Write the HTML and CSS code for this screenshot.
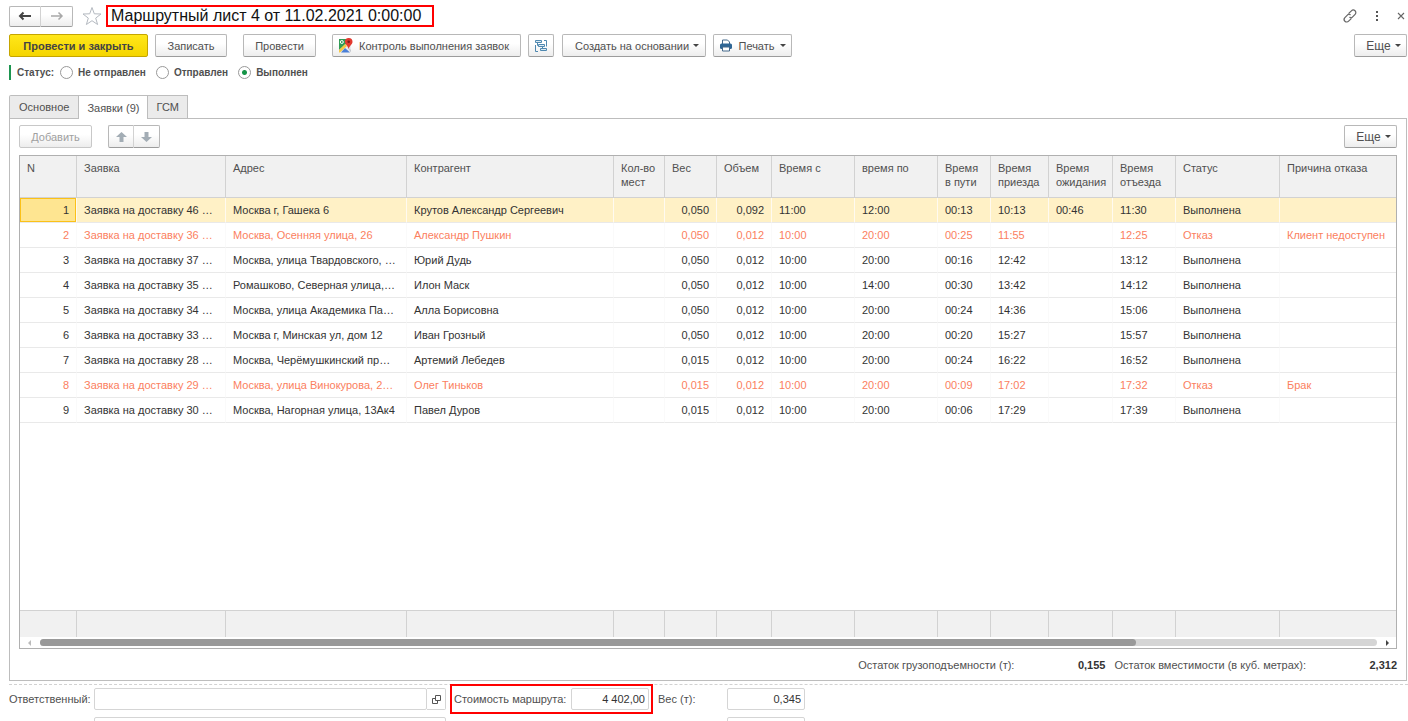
FILE: index.html
```html
<!DOCTYPE html>
<html lang="ru">
<head>
<meta charset="utf-8">
<title>Маршрутный лист 4 от 11.02.2021 0:00:00</title>
<link rel="stylesheet" href="styles.css">
</head>
<body>
<main class="form">
  <header class="titlebar">
    <div class="btn-pair">
      <button class="btn nav-btn" type="button" aria-label="Назад"><svg width="14" height="10" viewBox="0 0 14 10"><path d="M13 5H2M5.500 1.500L2 5l3.500 3.500" fill="none" stroke="#444" stroke-width="2"/></svg></button>
      <button class="btn nav-btn" type="button" aria-label="Вперед"><svg width="14" height="10" viewBox="0 0 14 10"><path d="M1 5h11M8.500 1.500L12 5 8.500 8.500" fill="none" stroke="#a8a8a8" stroke-width="1.500"/></svg></button>
    </div>
    <button class="icon-btn star" type="button" aria-label="В избранное"><svg width="20" height="20" viewBox="0 0 20 20"><path d="M10 1.500l2.300 6.300 6.700.2-5.300 4.100 1.900 6.400L10 14.700l-5.600 3.800 1.900-6.400L1 8l6.700-.2z" fill="#fff" stroke="#b4b9c0"/></svg></button>
    <h1 class="title">Маршрутный лист 4 от 11.02.2021 0:00:00</h1>
    <div class="window-tools">
      <button class="icon-btn" type="button" aria-label="Ссылка"><svg width="14" height="14" viewBox="0 0 14 14"><g fill="none" stroke="#666" stroke-width="1.200" stroke-linecap="round"><path d="M6 4.200l2.400-2.400a2.300 2.300 0 0 1 3.700 3.600L9.400 8.100a2 2 0 0 1-2.600.2"/><path d="M8 9.800l-2.400 2.400a2.300 2.300 0 0 1-3.700-3.600l2.700-2.700a2 2 0 0 1 2.600-.2"/></g></svg></button>
      <button class="icon-btn" type="button" aria-label="Меню"><svg width="4" height="12" viewBox="0 0 4 12"><path d="M1 1h2v2H1zM1 5h2v2H1zM1 9h2v2H1z" fill="#555"/></svg></button>
      <button class="icon-btn" type="button" aria-label="Закрыть"><svg width="8" height="8" viewBox="0 0 8 8"><path d="M1 1l6 6M7 1L1 7" stroke="#666" stroke-width="1.100"/></svg></button>
    </div>
  </header>

  <div class="commands">
    <button class="btn primary" type="button">Провести и закрыть</button>
    <button class="btn save" type="button">Записать</button>
    <button class="btn post" type="button">Провести</button>
    <button class="btn control" type="button"><svg width="15" height="15" viewBox="0 0 15 15"><path d="M1 1h12v13H1z" fill="#e8eaed"/><path d="M1 1h8v4L1 12z" fill="#2f9b55"/><path d="M1 12l6-6 2 2-7 6.500H1z" fill="#f6c945"/><path d="M3 14.500l4-4.500 5 4.500z" fill="#4a7fd6"/><path d="M9 8l4 4v2.500z" fill="#c4c8ce"/><circle cx="3.800" cy="4" r="1.500" fill="none" stroke="#fff"/><path d="M10.700 0a3.800 3.800 0 0 1 3.800 3.800c0 2.700-2.800 3.700-3.800 7.200-1-3.500-3.800-4.500-3.800-7.200A3.800 3.800 0 0 1 10.700 0z" fill="#e2392f"/><circle cx="10.700" cy="3.800" r="1.300" fill="#7c1d18"/></svg>Контроль выполнения заявок</button>
    <button class="btn structure" type="button" aria-label="Структура подчиненности"><svg width="14" height="14" viewBox="0 0 14 14"><g fill="#dcebf5" stroke="#4f88b0"><path d="M1.500 1.500h6v2h-6zM4.500 5.500h6v2h-6zM6.500 9.500h6v2h-6z"/><path d="M10 1.500h2.500v6M1.500 6v6.500H4M3.500 3.500v3h1M8.500 7.500v2" fill="none"/></g></svg></button>
    <button class="btn create" type="button">Создать на основании<span class="caret"></span></button>
    <button class="btn print" type="button"><svg width="14" height="13" viewBox="0 0 14 13"><path d="M3.500 5V1h5l2 2v2" fill="#fff" stroke="#44688a"/><rect x="1" y="4.500" width="12" height="5.500" rx="1.500" fill="#2f6695"/><path d="M3.500 8h7v4h-7z" fill="#fff" stroke="#44688a"/></svg>Печать<span class="caret"></span></button>
    <button class="btn more" type="button">Еще<span class="caret"></span></button>
  </div>

  <fieldset class="status">
    <legend class="status-name">Статус:</legend>
    <label class="choice"><input type="radio" name="status">Не отправлен</label>
    <label class="choice"><input type="radio" name="status">Отправлен</label>
    <label class="choice"><input type="radio" name="status" checked>Выполнен</label>
  </fieldset>

  <div class="tabs" role="tablist">
    <button class="tab" type="button" role="tab">Основное</button>
    <button class="tab active" type="button" role="tab" aria-selected="true">Заявки (9)</button>
    <button class="tab" type="button" role="tab">ГСМ</button>
  </div>

  <section class="panel">
    <div class="panel-tools">
      <button class="btn add" type="button" disabled>Добавить</button>
      <div class="btn-pair">
        <button class="btn move-btn" type="button" aria-label="Вверх"><svg width="11" height="10" viewBox="0 0 11 10"><path d="M5.500 0L11 5H7.500v5h-4V5H0z" fill="#a3adb5"/></svg></button>
        <button class="btn move-btn" type="button" aria-label="Вниз"><svg width="11" height="10" viewBox="0 0 11 10"><path d="M5.500 10L0 5h3.500V0h4v5H11z" fill="#a3adb5"/></svg></button>
      </div>
      <button class="btn more" type="button">Еще<span class="caret"></span></button>
    </div>

    <div class="grid">
      <table class="orders">
        <colgroup>
          <col class="c-n"><col class="c-order"><col class="c-addr"><col class="c-client"><col class="c-qty"><col class="c-weight"><col class="c-volume"><col class="c-from"><col class="c-to"><col class="c-way"><col class="c-arrive"><col class="c-wait"><col class="c-leave"><col class="c-status"><col class="c-reason">
        </colgroup>
        <thead>
          <tr><th>N</th><th>Заявка</th><th>Адрес</th><th>Контрагент</th><th>Кол-во<br>мест</th><th>Вес</th><th>Объем</th><th>Время с</th><th>время по</th><th>Время<br>в пути</th><th>Время<br>приезда</th><th>Время<br>ожидания</th><th>Время<br>отъезда</th><th>Статус</th><th>Причина отказа</th></tr>
        </thead>
        <tbody>
          <tr class="selected"><td class="num current">1</td><td>Заявка на доставку 46 …</td><td>Москва г, Гашека 6</td><td>Крутов Александр Сергеевич</td><td></td><td class="num">0,050</td><td class="num">0,092</td><td>11:00</td><td>12:00</td><td>00:13</td><td>10:13</td><td>00:46</td><td>11:30</td><td>Выполнена</td><td></td></tr>
          <tr class="refused"><td class="num">2</td><td>Заявка на доставку 36 …</td><td>Москва, Осенняя улица, 26</td><td>Александр Пушкин</td><td></td><td class="num">0,050</td><td class="num">0,012</td><td>10:00</td><td>20:00</td><td>00:25</td><td>11:55</td><td></td><td>12:25</td><td>Отказ</td><td>Клиент недоступен</td></tr>
          <tr><td class="num">3</td><td>Заявка на доставку 37 …</td><td>Москва, улица Твардовского, …</td><td>Юрий Дудь</td><td></td><td class="num">0,050</td><td class="num">0,012</td><td>10:00</td><td>20:00</td><td>00:16</td><td>12:42</td><td></td><td>13:12</td><td>Выполнена</td><td></td></tr>
          <tr><td class="num">4</td><td>Заявка на доставку 35 …</td><td>Ромашково, Северная улица,…</td><td>Илон Маск</td><td></td><td class="num">0,050</td><td class="num">0,012</td><td>10:00</td><td>14:00</td><td>00:30</td><td>13:42</td><td></td><td>14:12</td><td>Выполнена</td><td></td></tr>
          <tr><td class="num">5</td><td>Заявка на доставку 34 …</td><td>Москва, улица Академика Па…</td><td>Алла Борисовна</td><td></td><td class="num">0,050</td><td class="num">0,012</td><td>10:00</td><td>20:00</td><td>00:24</td><td>14:36</td><td></td><td>15:06</td><td>Выполнена</td><td></td></tr>
          <tr><td class="num">6</td><td>Заявка на доставку 33 …</td><td>Москва г, Минская ул, дом 12</td><td>Иван Грозный</td><td></td><td class="num">0,050</td><td class="num">0,012</td><td>10:00</td><td>20:00</td><td>00:20</td><td>15:27</td><td></td><td>15:57</td><td>Выполнена</td><td></td></tr>
          <tr><td class="num">7</td><td>Заявка на доставку 28 …</td><td>Москва, Черёмушкинский пр…</td><td>Артемий Лебедев</td><td></td><td class="num">0,015</td><td class="num">0,012</td><td>10:00</td><td>20:00</td><td>00:24</td><td>16:22</td><td></td><td>16:52</td><td>Выполнена</td><td></td></tr>
          <tr class="refused"><td class="num">8</td><td>Заявка на доставку 29 …</td><td>Москва, улица Винокурова, 2…</td><td>Олег Тиньков</td><td></td><td class="num">0,015</td><td class="num">0,012</td><td>10:00</td><td>20:00</td><td>00:09</td><td>17:02</td><td></td><td>17:32</td><td>Отказ</td><td>Брак</td></tr>
          <tr><td class="num">9</td><td>Заявка на доставку 30 …</td><td>Москва, Нагорная улица, 13Ак4</td><td>Павел Дуров</td><td></td><td class="num">0,015</td><td class="num">0,012</td><td>10:00</td><td>20:00</td><td>00:06</td><td>17:29</td><td></td><td>17:39</td><td>Выполнена</td><td></td></tr>
          <tr class="filler"><td colspan="15"></td></tr>
        </tbody>
        <tfoot>
          <tr><td></td><td></td><td></td><td></td><td></td><td></td><td></td><td></td><td></td><td></td><td></td><td></td><td></td><td></td><td></td></tr>
        </tfoot>
      </table>
      <div class="scroll">
        <span class="arrow arrow-left"></span>
        <div class="track"><div class="thumb"></div></div>
        <span class="arrow arrow-right"></span>
      </div>
    </div>

    <dl class="totals">
      <dt>Остаток грузоподъемности (т):</dt><dd>0,155</dd>
      <dt>Остаток вместимости (в куб. метрах):</dt><dd>2,312</dd>
    </dl>
  </section>

  <footer class="fields">
    <div class="field-row">
      <label class="field-name" for="responsible">Ответственный:</label>
      <div class="picker"><input class="box" id="responsible" type="text"><button class="pick" type="button" aria-label="Открыть"><svg width="9" height="9" viewBox="0 0 9 9"><path d="M3.500.5h5v5h-5zM3.500 3.500h-3v5h5v-3" fill="none" stroke="#555"/></svg></button></div>
      <div class="cost"><label for="cost">Стоимость маршрута:</label><input class="box" id="cost" type="text" value="4 402,00"></div>
      <label class="weight-name" for="weight">Вес (т):</label>
      <input class="box weight" id="weight" type="text" value="0,345">
    </div>
    <div class="field-row">
      <label class="field-name" for="executor">Исполнительный:</label>
      <div class="picker"><input class="box" id="executor" type="text"></div>
      <span class="cost-space"></span>
      <span class="weight-name"></span>
      <input class="box weight" type="text" aria-label="Объем">
    </div>
  </footer>
</main>
</body>
</html>
```
FILE: styles.css
```css
* { box-sizing: border-box; }

body {
  margin: 0;
  height: 100vh;
  overflow: hidden;
  background: #fff;
  color: #505050;
  font: 11px/14px "Liberation Sans", Arial, sans-serif;
}

button, input { font: inherit; color: inherit; margin: 0; }

.form { padding: 5px 0 0 9px; }

/* Buttons */
.btn {
  display: flex;
  align-items: center;
  justify-content: center;
  height: 23px;
  padding: 0;
  border: 1px solid #b8b8b8;
  border-bottom-color: #9c9c9c;
  border-radius: 2px;
  background: linear-gradient(#fff 40%, #ededed);
  white-space: nowrap;
}
.btn:disabled { color: #a0a0a0; border-color: #c8c8c8; }
.btn-pair { display: flex; }
.btn-pair .btn:first-child { border-radius: 2px 0 0 2px; border-right-color: #d2d2d2; }
.btn-pair .btn:last-child { border-left: 0; border-radius: 0 2px 2px 0; }
.caret {
  margin-left: 4px;
  border: 3px solid transparent;
  border-top-color: #444;
  border-bottom: 0;
}
.icon-btn { display: flex; padding: 0; border: 0; background: none; }
.more { width: 53px; margin-left: auto; padding-left: 6px; font-size: 12px; }

/* Title */
.titlebar { display: flex; align-items: center; height: 22px; padding-right: 3px; }
.nav-btn { width: 32px; height: 21px; }
.star { margin: 0 4px 0 9px; }
.title {
  margin: 0;
  padding: 0 11px 0 3px;
  border: 2px solid #f00;
  color: #111;
  font-size: 16px;
  font-weight: normal;
  line-height: 18px;
  white-space: nowrap;
}
.window-tools { display: flex; align-items: center; gap: 18px; margin-left: auto; }

/* Commands */
.commands { display: flex; padding: 7px 1px 0 0; }
.primary {
  width: 139px;
  border-color: #c5a500;
  background: linear-gradient(#ffe71a, #f5d500);
  color: #444;
  font-weight: bold;
}
.save { width: 72px; margin-left: 7px; }
.post { width: 73px; margin-left: 16px; }
.control { width: 189px; gap: 6px; margin-left: 16px; padding-right: 6px; }
.structure { width: 26px; margin-left: 7px; }
.create { width: 144px; margin-left: 8px; padding-left: 6px; }
.print { width: 79px; margin-left: 7px; gap: 5px; }
.print .caret { margin-left: 0; }

/* Status */
.status {
  display: flex;
  align-items: center;
  gap: 10px;
  height: 15px;
  margin: 8px 0 0;
  padding: 0 0 0 6px;
  border: 0;
  border-left: 2px solid #1d9550;
  font-size: 10px;
  font-weight: bold;
}
.status-name { float: left; padding: 0; margin-right: -4px; }
.choice { display: flex; align-items: center; gap: 5px; }
.choice input {
  appearance: none;
  width: 13px;
  height: 13px;
  border: 1px solid #999;
  border-radius: 50%;
  background: #fff;
}
.choice input:checked { background: radial-gradient(circle, #159447 2px, #fff 3px); }

/* Tabs */
.tabs { display: flex; margin-top: 15px; }
.tab {
  height: 23px;
  padding: 0 8px;
  border: 1px solid #bdbdbd;
  border-bottom: 0;
  background: #ebebeb;
}
.tab + .tab { border-left: 0; }
.tab:first-child { padding: 0 9px; border-radius: 2px 0 0 0; }
.active { position: relative; height: 24px; margin-bottom: -1px; background: #fff; }

.panel {
  margin-right: 1px;
  padding: 6px 9px 0;
  border: 1px solid #bdbdbd;
}
.panel-tools { display: flex; margin-bottom: 7px; }
.add { width: 73px; margin-right: 16px; }
.move-btn { width: 26px; }

/* Orders */
.grid { border: 1px solid #b0b0b0; }
.orders { width: 100%; table-layout: fixed; border-collapse: separate; border-spacing: 0; }
.c-n { width: 57px; }
.c-order { width: 149px; }
.c-addr { width: 181px; }
.c-client { width: 207px; }
.c-qty { width: 51px; }
.c-weight { width: 52px; }
.c-volume { width: 55px; }
.c-from, .c-to { width: 83px; }
.c-way { width: 53px; }
.c-arrive { width: 58px; }
.c-wait { width: 64px; }
.c-leave { width: 63px; }
.c-status { width: 104px; }

.orders th {
  height: 42px;
  padding: 5px 0 0 7px;
  border-right: 1px solid #d2d2d2;
  border-bottom: 1px solid #d2d2d2;
  background: #f1f1f1;
  font-weight: normal;
  text-align: left;
  vertical-align: top;
  white-space: nowrap;
}
.orders td {
  height: 25px;
  padding: 0 0 0 7px;
  border-right: 1px solid #fafafa;
  border-bottom: 1px solid #e9e9e9;
  color: #333;
  white-space: nowrap;
  overflow: hidden;
}
.orders tr > :last-child { border-right: 0; }
.orders .num { padding: 0 7px 0 0; text-align: right; }
.orders .refused td { color: #fb8060; }
.orders .selected td { background: #fff1c6; border-right-color: #fffaf0; }
.orders .selected .current { background: #fee591; box-shadow: inset 0 0 0 1px #fbc118; }
.orders .filler td { height: 187px; border: 0; }
.orders tfoot td {
  height: 27px;
  border-top: 1px solid #d2d2d2;
  border-right-color: #d2d2d2;
  border-bottom: 0;
  background: #f1f1f1;
}

.scroll { display: flex; align-items: center; gap: 9px; height: 11px; padding: 0 7px 0 8px; }
.track { flex: 1; height: 7px; border-radius: 4px; background: #d5d5d5; }
.thumb { width: 82%; height: 7px; border-radius: 4px; background: #999; }
.arrow { border: 3px solid transparent; }
.arrow-left { border-left: 0; border-right-color: #bbb; }
.arrow-right { border-right: 0; border-left-color: #444; }

.totals { display: flex; justify-content: flex-end; margin: 9px 0 8px; }
.totals dd { width: 91px; margin: 0; color: #333; font-weight: bold; text-align: right; }
.totals dt { margin-left: 9px; }

/* Fields */
.fields {
  display: grid;
  gap: 7px;
  margin-top: 3px;
  padding-top: 3px;
  border-top: 1px dashed #d2d2d2;
}
.field-row { display: flex; align-items: center; height: 22px; }
.field-name { width: 85px; white-space: nowrap; }
.picker { display: flex; width: 352px; }
.box {
  min-width: 0;
  height: 22px;
  padding: 0 3px;
  border: 1px solid #d5d5d5;
  border-radius: 2px;
  background: #fff;
  color: #333;
  text-align: right;
}
.picker .box { flex: 1; text-align: left; }
.pick {
  display: flex;
  align-items: center;
  justify-content: center;
  width: 19px;
  padding: 0;
  border: 1px solid #d5d5d5;
  border-left: 0;
  border-radius: 0 2px 2px 0;
  background: #fff;
}
.cost {
  display: flex;
  align-items: center;
  justify-content: space-between;
  width: 203px;
  height: 30px;
  margin-left: 4px;
  padding: 0 2px;
  border: 2px solid #f00;
  background: #fff;
  white-space: nowrap;
}
.cost .box { width: 78px; }
.cost-space { width: 207px; }
.weight-name { width: 74px; padding-left: 5px; }
.weight { width: 78px; }
```
